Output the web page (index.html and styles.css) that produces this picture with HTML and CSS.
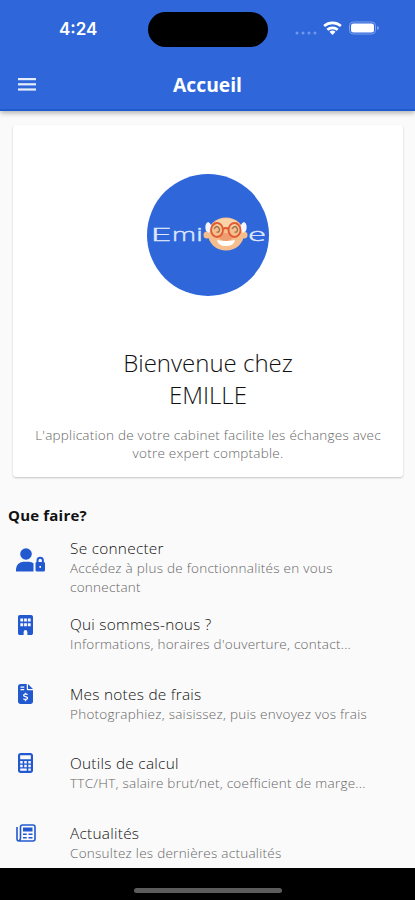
FILE: index.html
```html
<!DOCTYPE html>
<html lang="fr">
<head>
    <meta charset="UTF-8">
    <meta name="viewport" content="width=device-width, initial-scale=1.0">
    <title>Accueil</title>
    <link rel="stylesheet" href="styles.css">
</head>
<body>

    <div class="app">
        <header class="header">
            <div class="status-bar">
                <span class="time">4:24</span>
                <span class="island"></span>
                <svg class="status-icons" width="88" height="20" viewBox="0 0 88 20">
                    <g fill="#6f97ea">
                        <circle cx="5" cy="14" r="1.5"/>
                        <circle cx="11" cy="14" r="1.5"/>
                        <circle cx="17" cy="14" r="1.5"/>
                        <circle cx="23" cy="14" r="1.5"/>
                    </g>
                    <g fill="none" stroke="#fff" stroke-width="2.7">
                        <path d="M32.1 7a13 13 0 0 1 16.8 0"/>
                        <path d="M35.3 10.8a8 8 0 0 1 10.4 0"/>
                    </g>
                    <path d="M40.5 16l-3-3.2a4.5 4.5 0 0 1 6 0z" fill="#fff"/>
                    <rect x="57.5" y="3" width="26" height="12" rx="3.8" fill="none" stroke="#7ea2ee"/>
                    <rect x="59" y="4.5" width="23" height="9" rx="2.5" fill="#fff"/>
                    <path d="M85 7q2 .5 2 2t-2 2z" fill="#7ea2ee"/>
                </svg>
            </div>
            <div class="toolbar">
                <svg class="menu" width="18" height="13" viewBox="0 0 18 13" fill="#e6edfc">
                    <rect width="18" height="2.2"/>
                    <rect y="5.2" width="18" height="2.2"/>
                    <rect y="10.4" width="18" height="2.2"/>
                </svg>
                <h1>Accueil</h1>
            </div>
        </header>

        <main class="content">
            <section class="card">
                <svg class="logo" width="122" height="122" viewBox="0 0 122 122">
                    <circle cx="61" cy="61" r="61" fill="#2f67db"/>
                    <g class="logo-text">
                        <text x="3.5" y="66.500" textLength="21" lengthAdjust="spacingAndGlyphs">E</text>
                        <text x="25" y="66.500" textLength="24" lengthAdjust="spacingAndGlyphs">m</text>
                        <text x="49" y="66.500" textLength="7" lengthAdjust="spacingAndGlyphs">i</text>
                        <text x="101" y="66.500" textLength="18" lengthAdjust="spacingAndGlyphs">e</text>
                    </g>
                    <g fill="#f6bd8d">
                        <circle cx="60" cy="61" r="3.5"/>
                        <circle cx="97" cy="61" r="3.5"/>
                        <ellipse cx="79" cy="60" rx="18" ry="16.5"/>
                    </g>
                    <ellipse cx="79" cy="49" rx="11" ry="4.5" fill="#fbd3a8"/>
                    <path d="M59 57q-2-7 2-9 4 1 3 8l-2 3zM99 57q2-7-2-9-4 1-3 8l2 3z" fill="#f4f6ff"/>
                    <ellipse cx="79" cy="63" rx="7" ry="4" fill="#ee9c70"/>
                    <g fill="none" stroke="#de5b35" stroke-width="1.8">
                        <ellipse cx="70" cy="56" rx="6" ry="7"/>
                        <ellipse cx="87.5" cy="56" rx="6" ry="7"/>
                        <path d="M76 55q3-2 5.5 0"/>
                    </g>
                    <path d="M67 55q3-5 5.5 0 0 4-3 3M85 55q3-5 5.5 0 0 4-3 3" fill="none" stroke="#93724a" stroke-width="1.3"/>
                    <path d="M70 66q5 1 9 1 5 0 9-1-1 6-9 6t-9-6z" fill="#fff"/>
                </svg>
                <h2>Bienvenue chez<br>EMILLE</h2>
                <p class="description">L'application de votre cabinet facilite les échanges avec votre expert comptable.</p>
            </section>

            <h3>Que faire?</h3>
            <ul class="actions">
                <li class="action tall">
                    <svg class="icon" width="29" height="24" viewBox="0 0 29 24">
                        <circle cx="10" cy="6" r="5.8"/>
                        <path d="M0 23.5v-2.5a7.5 7.5 0 0 1 7-7.2h6q2.5 0 4.5 1.5v8.2z"/>
                        <path fill-rule="evenodd" d="M20.5 14v-1.5a3.7 3.7 0 0 1 7.4 0v1.5q1.1.2 1.1 1.4v6.6q0 1.5-1.5 1.5h-6.5q-1.5 0-1.5-1.5v-6.6q0-1.2 1-1.4zm2 0h3.4v-1.5a1.7 1.7 0 0 0-3.4 0zm.9 4v1.8h1.6v-1.8z"/>
                    </svg>
                    <div>
                        <h4>Se connecter</h4>
                        <p>Accédez à plus de fonctionnalités en vous connectant</p>
                    </div>
                </li>
                <li class="action">
                    <svg class="icon shift building" width="15" height="20" viewBox="0 0 384 512">
                        <path fill-rule="evenodd" d="M48 0C21 0 0 21 0 48v416c0 27 21 48 48 48h96v-80a48 48 0 0 1 96 0v80h96c27 0 48-21 48-48V48c0-27-21-48-48-48zM60 90h72v76H60zm96 0h72v76h-72zm96 0h72v76h-72zM60 214h72v76H60zm96 0h72v76h-72zm96 0h72v76h-72z"/>
                    </svg>
                    <div>
                        <h4>Qui sommes-nous ?</h4>
                        <p>Informations, horaires d'ouverture, contact...</p>
                    </div>
                </li>
                <li class="action">
                    <svg class="icon shift" width="15" height="20" viewBox="0 0 384 512">
                        <path d="M64 0C29 0 0 29 0 64v384c0 35 29 64 64 64h256c35 0 64-29 64-64V160H256c-18 0-32-14-32-32V0zM256 0v128h128z"/>
                        <path class="cut" d="M64 80h96M64 144h96M248 270c-20-16-100-24-104 20-3 42 98 24 100 70 1 44-72 44-108 18M192 226v40M192 400v42"/>
                    </svg>
                    <div>
                        <h4>Mes notes de frais</h4>
                        <p>Photographiez, saisissez, puis envoyez vos frais</p>
                    </div>
                </li>
                <li class="action">
                    <svg class="icon shift" width="15" height="20" viewBox="0 0 384 512">
                        <path fill-rule="evenodd" d="M64 0C29 0 0 29 0 64v384c0 35 29 64 64 64h256c35 0 64-29 64-64V64c0-35-29-64-64-64zM56 60h272v100H56zM56 204h64v64H56zm104 0h64v64h-64zm104 0h64v64h-64zM56 300h64v64H56zm104 0h64v64h-64zm104 0h64v64h-64zM56 398h168v54H56zm208 0h64v54h-64z"/>
                    </svg>
                    <div>
                        <h4>Outils de calcul</h4>
                        <p>TTC/HT, salaire brut/net, coefficient de marge...</p>
                    </div>
                </li>
                <li class="action">
                    <svg class="icon news" width="20" height="18" viewBox="0 0 20 18">
                        <path class="line" d="M4.500 14V3q0-2 2-2h10.500q2 0 2 2v12q0 2-2 2H3q-2 0-2-2V3M4.500 14q0 2-1.500 2.800"/>
                        <path d="M7 3.500h9.500v4H7zM7 9.500h3.700v1.500H7zM12.500 9.500h4v1.500h-4zM7 13h3.700v1.500H7zM12.500 13h4v1.500h-4z"/>
                    </svg>
                    <div>
                        <h4>Actualités</h4>
                        <p>Consultez les dernières actualités</p>
                    </div>
                </li>
            </ul>
        </main>

        <footer class="home-bar"><span></span></footer>
    </div>

</body>
</html>
```
FILE: styles.css
```css
* {
    box-sizing: border-box;
    margin: 0;
    padding: 0;
}
body {
    font-family: "Open Sans", sans-serif;
    background-color: #fafafa;
}
.app {
    display: flex;
    flex-direction: column;
    width: 415px;
    height: 900px;
    overflow: hidden;
}
.header {
    flex: none;
    height: 111px;
    background-color: #2f67db;
    border-bottom: 2px solid #1d5ccd;
    box-shadow: 0 2px 5px rgba(0, 0, 0, 0.3);
    color: #fff;
}
.status-bar {
    display: grid;
    grid-template-columns: 148px 120px 1fr;
    align-items: center;
    height: 58px;
}
.time {
    padding-left: 59px;
    font-family: Inter, sans-serif;
    font-size: 17px;
    font-weight: 600;
}
.island {
    height: 35px;
    border-radius: 18px;
    background-color: #000;
}
.status-icons {
    margin-left: 24px;
}
.toolbar {
    display: grid;
    grid-template-columns: 60px 1fr 60px;
    align-items: center;
    height: 53px;
}
.menu {
    margin-left: 18px;
}
h1 {
    font-size: 19.3px;
    font-weight: 700;
    text-align: center;
}
.content {
    flex: 1;
    min-height: 0;
    padding-top: 14px;
    overflow: hidden;
}
.card {
    display: flex;
    flex-direction: column;
    align-items: center;
    width: 390px;
    height: 352px;
    margin-left: 13px;
    padding-top: 49px;
    background-color: #fff;
    border-radius: 3px;
    box-shadow: 0 1px 2px rgba(0, 0, 0, 0.22);
    text-align: center;
}
.logo-text {
    font-family: "Open Sans", sans-serif;
    font-size: 19px;
    font-weight: 300;
    fill: #dfe8ff;
    stroke: #dfe8ff;
    stroke-width: 0.4;
}
h2 {
    margin-top: 51px;
    font-size: 24px;
    font-weight: 300;
    line-height: 32px;
    color: #111;
}
.description {
    width: 356px;
    margin-top: 15px;
    font-size: 13.5px;
    font-weight: 300;
    letter-spacing: 0.24px;
    line-height: 18.4px;
    color: #666;
}
h3 {
    margin: 28px 0 12px 8px;
    font-size: 15px;
    letter-spacing: 0.2px;
    line-height: 21px;
    color: #111;
}
.actions {
    list-style: none;
}
.action {
    display: grid;
    grid-template-columns: 54px 310px;
    height: 69.6px;
    padding-left: 16px;
}
.action.tall {
    height: 76px;
}
.icon {
    fill: #2359cf;
}
.tall .icon {
    margin-top: 10px;
}
.shift {
    margin-left: 2px;
}
.building,
.news {
    margin-top: 1px;
}
.cut {
    fill: none;
    stroke: #fafafa;
    stroke-width: 34;
}
.line {
    fill: none;
    stroke: #2359cf;
    stroke-width: 1.6;
}
h4 {
    font-size: 15.4px;
    font-weight: 300;
    letter-spacing: 0.26px;
    line-height: 21px;
    color: #111;
}
.action p {
    width: 300px;
    font-size: 13.5px;
    font-weight: 300;
    letter-spacing: 0.26px;
    line-height: 18.5px;
    color: #666;
}
.home-bar {
    display: flex;
    flex: none;
    justify-content: center;
    height: 32px;
    padding-top: 20px;
    background-color: #000;
}
.home-bar span {
    width: 148px;
    height: 5px;
    border-radius: 3px;
    background-color: #5c5c5c;
}
```
